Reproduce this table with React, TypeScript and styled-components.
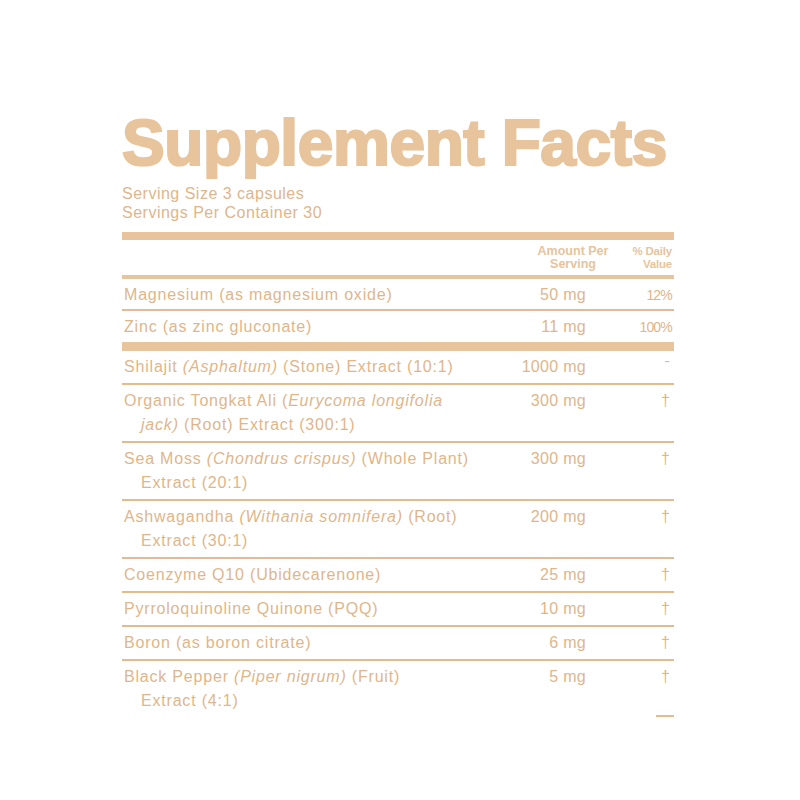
import React from "react";
import styled, { createGlobalStyle } from "styled-components";

const TAN = "#e7c49b";
const TEXT = "#dfb68a";
const LINE = "#e3bb8e";

const Global = createGlobalStyle`
  html, body { margin: 0; padding: 0; background: #ffffff; }
  body { font-family: "Liberation Sans", Arial, sans-serif; }
`;

const Page = styled.div`
  width: 800px;
  height: 800px;
  box-sizing: border-box;
  padding: 108px 0 0 122px;
  background: #fff;
`;

const Panel = styled.div`
  width: 552px;
  display: flex;
  flex-direction: column;
  color: ${TEXT};
`;

const Title = styled.h1`
  margin: 0;
  font-family: "Liberation Sans", Arial, sans-serif;
  font-weight: 700;
  font-size: 64px;
  line-height: 70px;
  letter-spacing: -0.4px;
  color: ${TAN};
  -webkit-text-stroke: 2.2px ${TAN};
  white-space: nowrap;
`;

const Serving = styled.div`
  margin-top: 6px;
  font-size: 16px;
  line-height: 19px;
  letter-spacing: 0.5px;
  color: ${TEXT};
`;

const Bar = styled.div<{ $h: number; $mt?: number }>`
  height: ${(p) => p.$h}px;
  margin-top: ${(p) => p.$mt ?? 0}px;
  background: ${TAN};
`;

const HeaderRow = styled.div`
  display: grid;
  grid-template-columns: 1fr 92px 55px;
  align-items: center;
  height: 35px;
  font-weight: 700;
  font-size: 12.5px;
  line-height: 13px;
  color: ${TAN};
`;

const HeadAmount = styled.div`
  text-align: center;
  grid-column: 2;
  white-space: nowrap;
`;

const HeadDV = styled.div`
  text-align: right;
  font-size: 11.5px;
  padding-right: 2px;
  letter-spacing: -0.2px;
  white-space: nowrap;
`;

const Row = styled.div<{ $last?: boolean; $tight?: boolean }>`
  display: grid;
  grid-template-columns: 1fr 110px 84px;
  padding: 4px 0 ${(p) => (p.$tight ? 2 : 4)}px;
  border-bottom: ${(p) => (p.$last ? "none" : `2px solid ${LINE}`)};
  font-size: 16px;
  line-height: 24px;
  letter-spacing: 0.8px;
`;

const Name = styled.div`
  padding-left: 2px;
  white-space: nowrap;
`;

const Cont = styled.div`
  padding-left: 17px;
`;

const Amount = styled.div`
  text-align: right;
  padding-right: 4px;
  white-space: nowrap;
  letter-spacing: 0.3px;
`;

const DV = styled.div<{ $small?: boolean }>`
  text-align: right;
  padding-right: ${(p) => (p.$small ? 2 : 4)}px;
  font-size: ${(p) => (p.$small ? 14 : 16)}px;
  letter-spacing: ${(p) => (p.$small ? -0.8 : 0)}px;
`;

const Tail = styled.div`
  display: flex;
  justify-content: flex-end;
  margin-top: -2px;
`;

const TailLine = styled.div`
  width: 18px;
  height: 2px;
  background: ${LINE};
`;

type Item = {
  lines: React.ReactNode[];
  amount: string;
  dv: string;
  small?: boolean;
};

const top: Item[] = [
  { lines: ["Magnesium (as magnesium oxide)"], amount: "50 mg", dv: "12%", small: true },
  { lines: ["Zinc (as zinc gluconate)"], amount: "11 mg", dv: "100%", small: true },
];

const blend: Item[] = [
  {
    lines: [<>Shilajit <i>(Asphaltum)</i> (Stone) Extract (10:1)</>],
    amount: "1000 mg",
    dv: "ˉ",
  },
  {
    lines: [
      <>Organic Tongkat Ali (<i>Eurycoma longifolia</i></>,
      <><i>jack)</i> (Root) Extract (300:1)</>,
    ],
    amount: "300 mg",
    dv: "†",
  },
  {
    lines: [<>Sea Moss <i>(Chondrus crispus)</i> (Whole Plant)</>, <>Extract (20:1)</>],
    amount: "300 mg",
    dv: "†",
  },
  {
    lines: [<>Ashwagandha <i>(Withania somnifera)</i> (Root)</>, <>Extract (30:1)</>],
    amount: "200 mg",
    dv: "†",
  },
  { lines: ["Coenzyme Q10 (Ubidecarenone)"], amount: "25 mg", dv: "†" },
  { lines: ["Pyrroloquinoline Quinone (PQQ)"], amount: "10 mg", dv: "†" },
  { lines: ["Boron (as boron citrate)"], amount: "6 mg", dv: "†" },
  {
    lines: [<>Black Pepper <i>(Piper nigrum)</i> (Fruit)</>, <>Extract (4:1)</>],
    amount: "5 mg",
    dv: "†",
  },
];

function FactRow({ item, last, tight }: { item: Item; last?: boolean; tight?: boolean }) {
  return (
    <Row $last={last} $tight={tight}>
      <Name>
        {item.lines.map((l, i) => (i === 0 ? <div key={i}>{l}</div> : <Cont key={i}>{l}</Cont>))}
      </Name>
      <Amount>{item.amount}</Amount>
      <DV $small={item.small}>{item.dv}</DV>
    </Row>
  );
}

export default function App() {
  return (
    <Page>
      <Global />
      <Panel>
        <Title>Supplement Facts</Title>
        <Serving>
          Serving Size 3 capsules
          <br />
          Servings Per Container 30
        </Serving>
        <Bar $h={8} $mt={10} />
        <HeaderRow>
          <HeadAmount>
            Amount Per
            <br />
            Serving
          </HeadAmount>
          <HeadDV>
            % Daily
            <br />
            Value
          </HeadDV>
        </HeaderRow>
        <Bar $h={4} />
        {top.map((it, i) => (
          <FactRow key={i} item={it} tight last={i === top.length - 1} />
        ))}
        <Bar $h={9} $mt={1} />
        {blend.map((it, i) => (
          <FactRow key={i} item={it} last={i === blend.length - 1} />
        ))}
        <Tail>
          <TailLine />
        </Tail>
      </Panel>
    </Page>
  );
}
